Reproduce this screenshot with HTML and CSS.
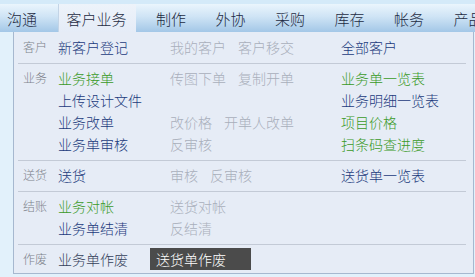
FILE: index.html
```html
<!DOCTYPE html>
<html lang="zh-CN">
<head>
  <meta charset="UTF-8">
  <title>客户业务</title>
  <link rel="stylesheet" href="styles.css">
</head>
<body>
  <div class="topstrip"></div>
  <nav class="menubar">
    <a class="tab">沟通</a>
    <a class="tab active">客户业务</a>
    <a class="tab">制作</a>
    <a class="tab">外协</a>
    <a class="tab">采购</a>
    <a class="tab">库存</a>
    <a class="tab">帐务</a>
    <a class="tab">产品</a>
  </nav>

  <div class="dropdown">
    <div class="group first">
      <div class="row">
        <span class="label">客户</span>
        <span class="col1"><a class="blue">新客户登记</a></span>
        <span class="col2"><a class="off">我的客户</a><a class="off">客户移交</a></span>
        <span class="col3"><a class="blue">全部客户</a></span>
      </div>
    </div>

    <div class="group">
      <div class="row">
        <span class="label">业务</span>
        <span class="col1"><a class="green">业务接单</a></span>
        <span class="col2"><a class="off">传图下单</a><a class="off">复制开单</a></span>
        <span class="col3"><a class="green">业务单一览表</a></span>
      </div>
      <div class="row">
        <span class="label"></span>
        <span class="col1"><a class="blue">上传设计文件</a></span>
        <span class="col2"></span>
        <span class="col3"><a class="blue">业务明细一览表</a></span>
      </div>
      <div class="row">
        <span class="label"></span>
        <span class="col1"><a class="blue">业务改单</a></span>
        <span class="col2"><a class="off">改价格</a><a class="off">开单人改单</a></span>
        <span class="col3"><a class="green">项目价格</a></span>
      </div>
      <div class="row">
        <span class="label"></span>
        <span class="col1"><a class="blue">业务单审核</a></span>
        <span class="col2"><a class="off">反审核</a></span>
        <span class="col3"><a class="green">扫条码查进度</a></span>
      </div>
    </div>

    <div class="group">
      <div class="row">
        <span class="label">送货</span>
        <span class="col1"><a class="blue">送货</a></span>
        <span class="col2"><a class="off">审核</a><a class="off">反审核</a></span>
        <span class="col3"><a class="blue">送货单一览表</a></span>
      </div>
    </div>

    <div class="group">
      <div class="row">
        <span class="label">结账</span>
        <span class="col1"><a class="green">业务对帐</a></span>
        <span class="col2"><a class="off">送货对帐</a></span>
        <span class="col3"></span>
      </div>
      <div class="row">
        <span class="label"></span>
        <span class="col1"><a class="blue">业务单结清</a></span>
        <span class="col2"><a class="off">反结清</a></span>
        <span class="col3"></span>
      </div>
    </div>

    <div class="group last">
      <div class="row">
        <span class="label">作废</span>
        <span class="col1"><a class="dim">业务单作废</a></span>
        <span class="col2"><a class="hover">送货单作废</a></span>
        <span class="col3"></span>
      </div>
    </div>
  </div>
</body>
</html>
```

FILE: styles.css
```css
body {
  margin: 0;
  width: 475px;
  height: 277px;
  overflow: hidden;
  background: #e2f1fb;
  font-family: "Microsoft YaHei", "Noto Sans CJK SC", sans-serif;
  font-weight: 300;
}
a {
  cursor: pointer;
}
.topstrip {
  height: 4px;
  background: #d4eaf9;
}
.menubar {
  display: flex;
  gap: 11.5px;
  height: 28px;
  margin-left: -2px;
  background: linear-gradient(#eaf5fd, #cfe4f5 45%, #a3c7e7);
}
.tab {
  padding: 0 9px;
  font-size: 15px;
  line-height: 29px;
  color: #1d2b42;
  white-space: nowrap;
}
.tab.active {
  background: linear-gradient(#edf3fa, #e5ecf7);
  box-shadow: inset 1px 0 0 #c3d4e6;
}
.dropdown {
  margin-left: 13px;
  width: 459px;
  height: 241px;
  border: 1px solid #a6b8cf;
  border-top: none;
  background: #e6ecf6;
}
.group {
  margin: 0 7px 0 4px;
  padding: 3px 0 5px 5px;
  border-bottom: 1px solid #c3cad6;
}
.group.first {
  padding-top: 4px;
}
.group.last {
  border-bottom: none;
  padding-bottom: 0;
}
.row {
  display: grid;
  grid-template-columns: 35px 112px 171px 1fr;
  height: 22px;
  line-height: 22px;
  font-size: 14px;
  white-space: nowrap;
}
.label {
  font-size: 12px;
  color: #7d828b;
}
.col2 a {
  margin-right: 12px;
}
.blue {
  color: #1b3a7c;
}
.green {
  color: #3a9a28;
}
.off {
  color: #a9afbb;
}
.dim {
  color: #34405a;
}
.col2 .hover {
  display: inline-block;
  width: 95px;
  margin-left: -20px;
  padding-left: 6px;
  background: #4b4b4b;
  color: #ffffff;
}
```
